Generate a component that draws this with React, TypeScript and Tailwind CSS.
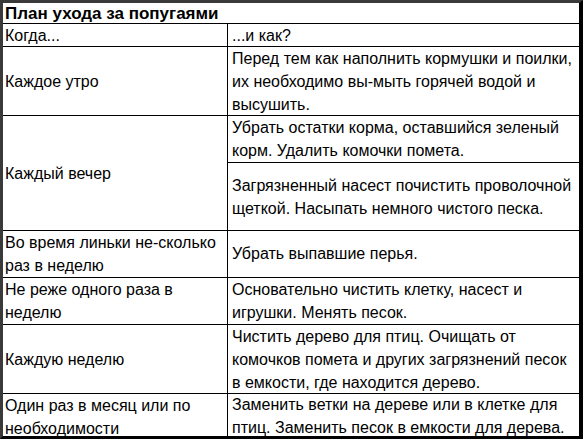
const rows: { when: string; how: string[]; h: number[] }[] = [
  {
    when: 'Каждое утро',
    how: ['Перед тем как наполнить кормушки и поилки, их необходимо вы-мыть горячей водой и высушить.'],
    h: [68],
  },
  {
    when: 'Каждый вечер',
    how: [
      'Убрать остатки корма, оставшийся зеленый корм. Удалить комочки помета.',
      'Загрязненный насест почистить проволочной щеткой. Насыпать немного чистого песка.',
    ],
    h: [46, 67],
  },
  { when: 'Во время линьки не-сколько раз в неделю', how: ['Убрать выпавшие перья.'], h: [45] },
  {
    when: 'Не реже одного раза в неделю',
    how: ['Основательно чистить клетку, насест и игрушки. Менять песок.'],
    h: [45],
  },
  {
    when: 'Каждую неделю',
    how: ['Чистить дерево для птиц. Очищать от комочков помета и других загрязнений песок в емкости, где находится дерево.'],
    h: [68],
  },
  {
    when: 'Один раз в месяц или по необходимости',
    how: ['Заменить ветки на дереве или в клетке для птиц. Заменить песок в емкости для дерева.'],
    h: [44],
  },
]

export default function App() {
  return (
    <div
      className="w-[583px] h-[439px] bg-white text-black border-t-[3px] border-l-[3px] border-r-[4px] border-b-[3px] border-t-[#3a3a3a] border-l-[#3a3a3a] border-r-black border-b-black flex flex-col text-[16px] leading-[23px]"
      style={{ fontFamily: '"Liberation Sans", Arial, sans-serif' }}
    >
      <div className="h-[21px] border-b border-black pl-0.5 flex items-center font-bold text-[17px]">
        План ухода за попугаями
      </div>
      <div className="h-[23px] border-b border-black flex">
        <div className="w-[225px] border-r border-black pl-0.5 flex items-center">Когда...</div>
        <div className="flex-1 px-1 flex items-center">...и как?</div>
      </div>
      {rows.map((r, i) => (
        <div key={i} className={`flex ${i < rows.length - 1 ? 'border-b border-black' : ''}`}>
          <div className="w-[225px] border-r border-black pl-0.5 pr-1 flex items-center">{r.when}</div>
          <div className="flex-1 flex flex-col">
            {r.how.map((t, j) => (
              <div
                key={j}
                className={`px-1 flex items-center ${j < r.how.length - 1 ? 'border-b border-black' : ''}`}
                style={{ height: r.h[j] + (j < r.how.length - 1 ? 1 : 0) }}
              >
                {t}
              </div>
            ))}
          </div>
        </div>
      ))}
    </div>
  )
}
